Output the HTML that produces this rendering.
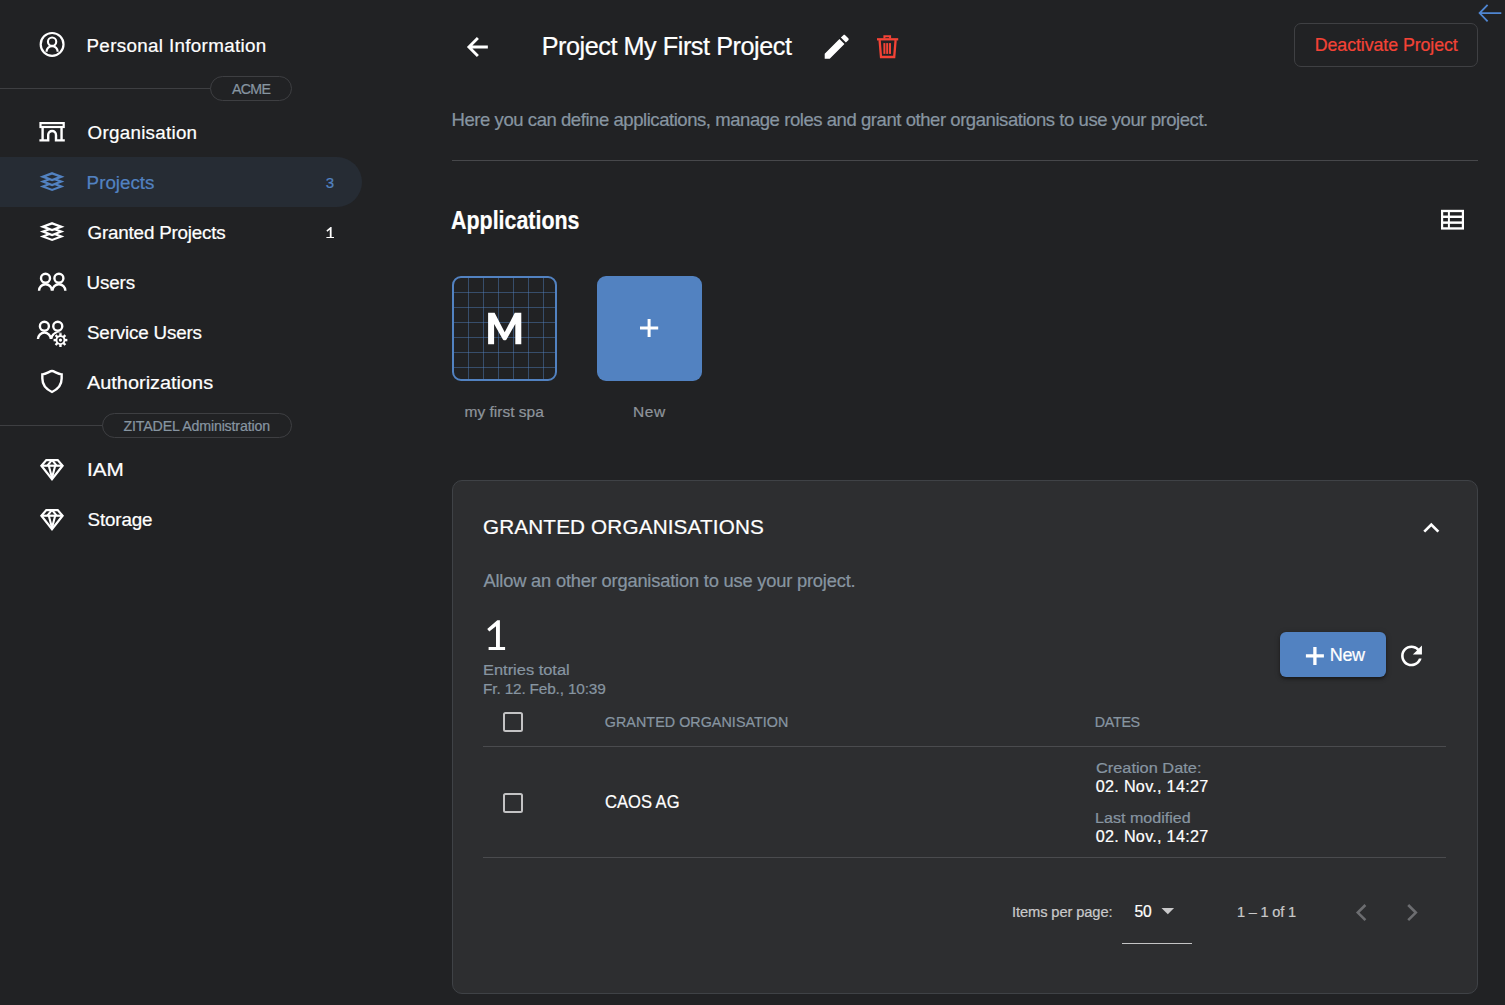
<!DOCTYPE html>
<html lang="en">
<head>
<meta charset="utf-8">
<title>ZITADEL Console - Project My First Project</title>
<style>

html,body{margin:0;padding:0;background:#212224;}
body{width:1505px;height:1005px;overflow:hidden;font-family:"Liberation Sans",sans-serif;}
#app{position:relative;width:1505px;height:1005px;overflow:hidden;background:#212224;}
.t{position:absolute;white-space:pre;transform-origin:0 50%;-webkit-text-stroke:0.22px currentColor;}
.a{position:absolute;}
svg{position:absolute;overflow:visible;}
.line{position:absolute;height:1px;background:#3e3f42;}
.pill{position:absolute;box-sizing:border-box;border:1px solid #3e3f42;border-radius:13px;background:#212224;}
.cb{position:absolute;box-sizing:border-box;width:20px;height:20px;border:2px solid #c3c3c4;border-radius:2.5px;}

</style>
</head>
<body>
<div id="app">

<!-- sidebar -->
<div class="a" style="left:0;top:157px;width:362px;height:50px;background:#262c34;border-radius:0 25px 25px 0;"></div>
<div class="line" style="left:0;top:88px;width:211px;"></div>
<div class="pill" style="left:210px;top:76px;width:82px;height:25px;"></div>
<div class="line" style="left:0;top:425px;width:103px;"></div>
<div class="pill" style="left:102px;top:413px;width:190px;height:25px;"></div>
<!-- header -->
<div class="a" style="left:1294px;top:23px;width:184px;height:44px;box-sizing:border-box;border:1px solid #3f4043;border-radius:7px;"></div>
<div class="line" style="left:452px;top:160px;width:1026px;background:#47484b;"></div>
<!-- app tiles -->
<div class="a" style="left:452px;top:276px;width:105px;height:105px;box-sizing:border-box;border:2px solid #5282c1;border-radius:9px;background-color:#212224;background-image:linear-gradient(to right,transparent 14px,rgba(82,130,193,.45) 14px),linear-gradient(to bottom,transparent 14px,rgba(82,130,193,.45) 14px);background-size:15px 15px;background-position:0 0;"></div>
<div class="a" style="left:597px;top:276px;width:105px;height:105px;border-radius:9px;background:#5282c1;"></div>
<!-- card -->
<div class="a" style="left:452px;top:480px;width:1026px;height:514px;box-sizing:border-box;border:1px solid #3f4246;border-radius:10px;background:#2d2e30;"></div>
<div class="a" style="left:1280px;top:632px;width:106px;height:45px;border-radius:6px;background:#5282c1;box-shadow:0 2px 3px rgba(0,0,0,.35),0 1px 6px rgba(0,0,0,.2);"></div>
<div class="cb" style="left:503px;top:712px;"></div>
<div class="line" style="left:483px;top:746px;width:963px;background:#4a4b4e;"></div>
<div class="cb" style="left:503px;top:793px;"></div>
<div class="line" style="left:483px;top:857px;width:963px;background:#4a4b4e;"></div>
<div class="line" style="left:1122px;top:943px;width:70px;background:#c4c4c5;"></div>

<svg width="1505" height="1005" viewBox="0 0 1505 1005" style="left:0;top:0;">
<g fill="none" stroke="#fff" stroke-width="2.2"><circle cx="52.1" cy="44.4" r="11.4"/><circle cx="52.1" cy="41.7" r="4.15" stroke-width="2.1"/><path d="M46.5 51.7a5.6 5.6 0 0 1 11.2 0"/></g>
<g fill="none" stroke="#fff" stroke-width="2.4" stroke-linejoin="miter"><rect x="40.5" y="123.1" width="23.2" height="3.9" stroke-width="2.2"/><path d="M42.6 128V140.4M61.55 128V140.4M39.4 140.4H48.2V134.9a3.9 3.9 0 0 1 7.8 0V140.4H64.8"/></g>
<g fill="none" stroke="#5282c1" stroke-linejoin="miter"><path stroke-width="2.3" d="M52.1 173.29999999999998L61.3 176.7L52.1 180.1L42.900000000000006 176.7Z"/><path stroke-width="2.15" d="M49.50 179.16L42.900000000000006 181.6L52.1 185.0L61.3 181.6L54.70 179.16"/><path stroke-width="2.15" d="M49.50 184.06L42.900000000000006 186.5L52.1 189.9L61.3 186.5L54.70 184.06"/></g>
<g fill="none" stroke="#fff" stroke-linejoin="miter"><path stroke-width="2.3" d="M52.1 223.29999999999998L61.3 226.7L52.1 230.1L42.900000000000006 226.7Z"/><path stroke-width="2.15" d="M49.50 229.16L42.900000000000006 231.6L52.1 235.0L61.3 231.6L54.70 229.16"/><path stroke-width="2.15" d="M49.50 234.06L42.900000000000006 236.5L52.1 239.9L61.3 236.5L54.70 234.06"/></g>
<g fill="none" stroke="#fff" stroke-width="2.4"><circle cx="45.5" cy="278.25" r="4.5"/><circle cx="58.9" cy="278.25" r="4.5"/><path d="M39.05 290.7a6.45 6.45 0 0 1 12.9 0M52.449999999999996 290.7a6.45 6.45 0 0 1 12.9 0"/></g>
<g fill="none" stroke="#fff" stroke-width="2.4"><circle cx="44.4" cy="326.2" r="4.5"/><circle cx="57.75" cy="326.2" r="4.5"/><path d="M37.949999999999996 339.1a6.45 6.45 0 0 1 12.9 0M51.3 339.1a6.45 6.45 0 0 1 12.9 0"/></g>
<circle cx="60.45" cy="340.1" r="7.9" fill="#212224"/><g fill="#fff"><rect x="59.25" y="333.20000000000005" width="2.4" height="3.2" transform="rotate(0 60.45 340.1)"/><rect x="59.25" y="333.20000000000005" width="2.4" height="3.2" transform="rotate(45 60.45 340.1)"/><rect x="59.25" y="333.20000000000005" width="2.4" height="3.2" transform="rotate(90 60.45 340.1)"/><rect x="59.25" y="333.20000000000005" width="2.4" height="3.2" transform="rotate(135 60.45 340.1)"/><rect x="59.25" y="333.20000000000005" width="2.4" height="3.2" transform="rotate(180 60.45 340.1)"/><rect x="59.25" y="333.20000000000005" width="2.4" height="3.2" transform="rotate(225 60.45 340.1)"/><rect x="59.25" y="333.20000000000005" width="2.4" height="3.2" transform="rotate(270 60.45 340.1)"/><rect x="59.25" y="333.20000000000005" width="2.4" height="3.2" transform="rotate(315 60.45 340.1)"/><circle cx="60.45" cy="340.1" r="4.95"/></g><circle cx="60.45" cy="340.1" r="2.35" fill="none" stroke="#212224" stroke-width="1.5"/>
<path d="M42.35 374.4C46.6 374.1 49.6 371.05 52 371.05C54.4 371.05 57.4 374.1 61.65 374.4V378.6C61.65 385 57.6 389.5 52 392C46.4 389.5 42.35 385 42.35 378.6Z" fill="none" stroke="#fff" stroke-width="2.4" stroke-linejoin="miter"/>
<g fill="none" stroke="#fff" stroke-width="2.2" stroke-linejoin="miter"><path d="M46.3 460.05H57.7L62.6 465.7L52 479.25L41.4 465.7Z"/><path d="M41.4 465.7H62.6" /><path stroke-linejoin="bevel" stroke-width="2.1" d="M47.4 465.7L52 459.85L56.6 465.7M48.8 465.7L52 477.75L55.2 465.7"/></g>
<g fill="none" stroke="#fff" stroke-width="2.2" stroke-linejoin="miter"><path d="M46.3 510.05H57.7L62.6 515.7L52 529.25L41.4 515.7Z"/><path d="M41.4 515.7H62.6" /><path stroke-linejoin="bevel" stroke-width="2.1" d="M47.4 515.7L52 509.85L56.6 515.7M48.8 515.7L52 527.75L55.2 515.7"/></g>
<path d="M477.9 38L468.9 47L477.9 56M469.5 47H487.85" fill="none" stroke="#fff" stroke-width="2.85" stroke-linejoin="miter"/>
<path d="M1487.6 4.9L1479.6 13.1L1487.6 21.3M1480 13.1H1501.3" fill="none" stroke="#4f86d2" stroke-width="1.8" stroke-linejoin="miter"/>
<path d="M3 17.25V21h3.75L17.81 9.94l-3.75-3.75L3 17.25zM20.71 7.04c.39-.39.39-1.02 0-1.41l-2.34-2.34c-.39-.39-1.02-.39-1.41 0l-1.83 1.83 3.75 3.75 1.83-1.83z" fill="#fff" transform="translate(820.7 30.75) scale(1.3333)"/>
<g fill="none" stroke="#f44336" stroke-width="2.3" stroke-linejoin="miter"><path stroke-width="2" d="M884.4 38.6V36.2H890.1V38.6"/><path d="M877 39.3H898.2"/><path d="M879.6 40.2L881 57H894.2L895.6 40.2"/></g><g fill="#f44336"><rect x="883.4" y="43.1" width="2" height="10.8"/><rect x="886.2" y="43.1" width="2" height="10.8"/><rect x="889" y="43.1" width="2" height="10.8"/></g>
<rect x="1441" y="209.8" width="23" height="19.8" fill="#fff"/><g fill="#212224"><rect x="1443.2" y="212.15" width="4.7" height="3.4"/><rect x="1449.9" y="212.15" width="11.9" height="3.4"/><rect x="1443.2" y="218.0" width="4.7" height="3.4"/><rect x="1449.9" y="218.0" width="11.9" height="3.4"/><rect x="1443.2" y="223.85" width="4.7" height="3.4"/><rect x="1449.9" y="223.85" width="11.9" height="3.4"/></g>
<path d="M12 8l-6 6 1.41 1.41L12 10.83l4.59 4.58L18 14z" fill="#fff" transform="translate(1415.3 512.05) scale(1.3333)"/>
<path d="M1314.9 646.9V664.9M1305.9 655.9H1323.9" fill="none" stroke="#fff" stroke-width="3.3"/>
<path d="M17.65 6.35C16.2 4.9 14.21 4 12 4c-4.42 0-7.99 3.58-7.99 8s3.57 8 7.99 8c3.73 0 6.84-2.55 7.73-6h-2.08c-.82 2.33-3.04 4-5.65 4-3.31 0-6-2.69-6-6s2.69-6 6-6c1.66 0 3.14.69 4.22 1.78L13 11h7V4l-2.35 2.35z" fill="#fff" transform="translate(1395.85 640.25) scale(1.3042)"/>
<path d="M1161.5 908H1174.1L1167.8 914.2Z" fill="#c9c9ca"/>
<path d="M1365.4 905L1357.8 912.6L1365.4 920.2M1408.2 905L1415.8 912.6L1408.2 920.2" fill="none" stroke="#6c6d70" stroke-width="2.6" stroke-linejoin="miter"/>
<path d="M488.1 344.2V312.8H494.6L504.7 332.3L514.8 312.8H521.3V344.2H515.3V323.9L506.5 339.5Q504.7 341.2 502.9 339.5L494.1 323.9V344.2Z" fill="#fff"/>
<path d="M649.1 319.1V337M640 328.05H658.2" fill="none" stroke="#fff" stroke-width="3"/>
<path d="M496 650V626.2L489.3 631.6L487.2 628.9L497.3 620.3H499.9V650Z M488.6 647H505.1V650H488.6Z" fill="#fff"/>
<path d="M329.8 238.1V229.7L327.3 231.7L326.4 230.5L330.5 226.9H331.6V238.1Z M326.4 236.9H334V238.1H326.4Z" fill="#fff"/>
</svg>
<span class="t" style="left:86.50px;top:37.10px;font-size:18.8px;line-height:18.8px;color:#ffffff;letter-spacing:0.339px;">Personal Information</span>
<span class="t" style="left:232.00px;top:82.00px;font-size:14.2px;line-height:14.2px;color:#8795a1;letter-spacing:-0.676px;">ACME</span>
<span class="t" style="left:87.60px;top:124.10px;font-size:18.8px;line-height:18.8px;color:#ffffff;letter-spacing:0.269px;">Organisation</span>
<span class="t" style="left:86.60px;top:174.10px;font-size:18.8px;line-height:18.8px;color:#5282c1;letter-spacing:0.007px;">Projects</span>
<span class="t" style="left:325.70px;top:175.00px;font-size:15px;line-height:15px;color:#5282c1;transform:scaleX(1.0000);">3</span>
<span class="t" style="left:87.60px;top:224.10px;font-size:18.8px;line-height:18.8px;color:#ffffff;letter-spacing:-0.189px;">Granted Projects</span>
<span class="t" style="left:86.40px;top:274.10px;font-size:18.8px;line-height:18.8px;color:#ffffff;letter-spacing:-0.063px;">Users</span>
<span class="t" style="left:87.00px;top:324.10px;font-size:18.8px;line-height:18.8px;color:#ffffff;letter-spacing:-0.158px;">Service Users</span>
<span class="t" style="left:87.00px;top:374.00px;font-size:18.8px;line-height:18.8px;color:#ffffff;transform:scaleX(1.0596);">Authorizations</span>
<span class="t" style="left:123.50px;top:419.00px;font-size:14.2px;line-height:14.2px;color:#8795a1;letter-spacing:-0.154px;">ZITADEL Administration</span>
<span class="t" style="left:86.50px;top:461.10px;font-size:18.8px;line-height:18.8px;color:#ffffff;transform:scaleX(1.1025);">IAM</span>
<span class="t" style="left:87.60px;top:511.10px;font-size:18.8px;line-height:18.8px;color:#ffffff;letter-spacing:-0.139px;">Storage</span>
<span class="t" style="left:541.70px;top:34.30px;font-size:25.2px;line-height:25.2px;color:#ffffff;letter-spacing:-0.440px;">Project My First Project</span>
<span class="t" style="left:1314.80px;top:36.90px;font-size:17.8px;line-height:17.8px;color:#f44336;letter-spacing:-0.079px;">Deactivate Project</span>
<span class="t" style="left:451.60px;top:111.10px;font-size:18.5px;line-height:18.5px;color:#8795a1;letter-spacing:-0.442px;">Here you can define applications, manage roles and grant other organisations to use your project.</span>
<span class="t" style="left:451.30px;top:206.70px;font-size:26.3px;line-height:26.3px;color:#ffffff;font-weight:700;transform:scaleX(0.8144);">Applications</span>
<span class="t" style="left:464.60px;top:404.00px;font-size:15.5px;line-height:15.5px;color:#8e949b;letter-spacing:-0.001px;">my first spa</span>
<span class="t" style="left:633.10px;top:404.00px;font-size:15.5px;line-height:15.5px;color:#8e949b;letter-spacing:0.543px;">New</span>
<span class="t" style="left:483.00px;top:516.80px;font-size:20.7px;line-height:20.7px;color:#ffffff;letter-spacing:0.151px;">GRANTED ORGANISATIONS</span>
<span class="t" style="left:483.50px;top:571.70px;font-size:18.3px;line-height:18.3px;color:#8795a1;letter-spacing:-0.191px;">Allow an other organisation to use your project.</span>
<span class="t" style="left:483.03px;top:661.80px;font-size:15.4px;line-height:15.4px;color:#8795a1;transform:scaleX(1.0670);">Entries total</span>
<span class="t" style="left:483.10px;top:680.80px;font-size:15.4px;line-height:15.4px;color:#8795a1;letter-spacing:-0.172px;">Fr. 12. Feb., 10:39</span>
<span class="t" style="left:1329.80px;top:645.90px;font-size:18px;line-height:18px;color:#ffffff;letter-spacing:-0.405px;">New</span>
<span class="t" style="left:604.80px;top:715.10px;font-size:14.3px;line-height:14.3px;color:#8795a1;letter-spacing:0.058px;">GRANTED ORGANISATION</span>
<span class="t" style="left:1094.80px;top:715.10px;font-size:14.3px;line-height:14.3px;color:#8795a1;letter-spacing:-0.317px;">DATES</span>
<span class="t" style="left:604.80px;top:792.90px;font-size:18.2px;line-height:18.2px;color:#ffffff;transform:scaleX(0.9103);">CAOS AG</span>
<span class="t" style="left:1095.80px;top:759.90px;font-size:15.3px;line-height:15.3px;color:#8795a1;transform:scaleX(1.0690);">Creation Date:</span>
<span class="t" style="left:1095.80px;top:778.30px;font-size:16.2px;line-height:16.2px;color:#ffffff;letter-spacing:0.273px;">02. Nov., 14:27</span>
<span class="t" style="left:1094.75px;top:809.90px;font-size:15.3px;line-height:15.3px;color:#8795a1;transform:scaleX(1.0528);">Last modified</span>
<span class="t" style="left:1095.80px;top:828.30px;font-size:16.2px;line-height:16.2px;color:#ffffff;letter-spacing:0.273px;">02. Nov., 14:27</span>
<span class="t" style="left:1012.00px;top:904.80px;font-size:14.7px;line-height:14.7px;color:#c9c9ca;letter-spacing:-0.105px;">Items per page:</span>
<span class="t" style="left:1134.50px;top:904.20px;font-size:15.6px;line-height:15.6px;color:#ffffff;letter-spacing:-0.273px;">50</span>
<span class="t" style="left:1237.00px;top:905.20px;font-size:14.6px;line-height:14.6px;color:#c9c9ca;letter-spacing:-0.193px;">1 – 1 of 1</span>
</div>
</body>
</html>
